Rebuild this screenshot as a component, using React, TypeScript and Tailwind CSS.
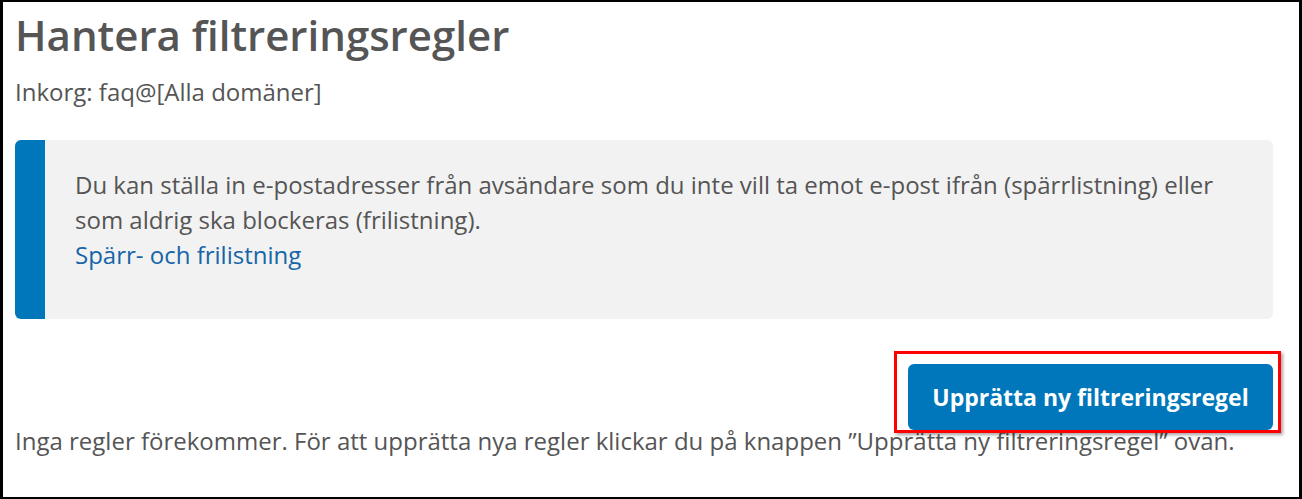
// Filter rules page: heading, inbox line, info callout and the create button.

const FONT = { fontFamily: '"Open Sans", "Noto Sans", sans-serif' };

export default function App() {
  return (
    <div
      className="box-border h-[499px] w-[1302px] border-b-2 border-l-[3px] border-r-[3px] border-t-2 border-black bg-white pl-3 pr-[26px] text-[#555555]"
      style={FONT}
    >
      <h1 className="mt-2 text-[42px] font-semibold leading-[50px]">Hantera filtreringsregler</h1>
      <p className="mt-[15px] text-[24px] leading-[33px]">Inkorg: faq@[Alla domäner]</p>

      <div className="mt-8 flex h-[179px] overflow-hidden rounded-md bg-[#f2f2f2]">
        <div className="w-[30px] shrink-0 bg-[#0077bb]" />
        <div className="pl-[30px] pr-[28px] pt-[27px] text-[24px] leading-[35px]">
          <p>
            Du kan ställa in e-postadresser från avsändare som du inte vill ta emot e-post ifrån (spärrlistning) eller
            som aldrig ska blockeras (frilistning).
          </p>
          <a href="#" className="text-[#1565a8]">
            Spärr- och frilistning
          </a>
        </div>
      </div>

      <div className="mt-[45px] flex justify-end">
        <div className="relative">
          <button className="h-[66px] w-[365px] rounded-md bg-[#0077bb] text-[23px] font-bold text-white">
            Upprätta ny filtreringsregel
          </button>
          <div className="pointer-events-none absolute -bottom-[3px] -left-[14px] -right-[8px] -top-[13px] border-[3px] border-[#ff0000] shadow-[2px_2px_3px_rgba(0,0,0,0.35)]" />
        </div>
      </div>

      <p className="-mt-[6px] text-[24px] leading-[33px]">
        Inga regler förekommer. För att upprätta nya regler klickar du på knappen ”Upprätta ny filtreringsregel” ovan.
      </p>
    </div>
  );
}
